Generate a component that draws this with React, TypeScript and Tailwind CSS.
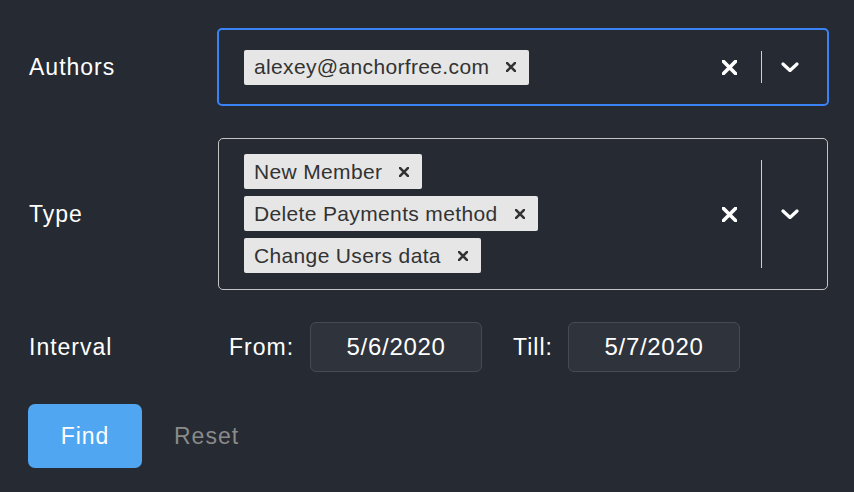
import React from "react";

function ClearIcon() {
  return (
    <svg width="15" height="15" viewBox="0 0 15 15" className="block">
      <path d="M-1 -1 L16 16 M16 -1 L-1 16" stroke="#ffffff" strokeWidth="3.6" strokeLinecap="square" fill="none" />
    </svg>
  );
}

function Chevron() {
  return (
    <svg width="18" height="10" viewBox="0 0 18 10" className="block">
      <path d="M2 2 L9 8.5 L16 2" stroke="#ffffff" strokeWidth="3.2" strokeLinecap="round" strokeLinejoin="round" fill="none" />
    </svg>
  );
}

function TagX() {
  return (
    <svg width="10" height="10" viewBox="0 0 10 10" className="block">
      <path d="M-0.5 -0.5 L10.5 10.5 M10.5 -0.5 L-0.5 10.5" stroke="#333333" strokeWidth="2.6" strokeLinecap="square" fill="none" />
    </svg>
  );
}

function Tag({ label }: { label: string }) {
  return (
    <div className="flex h-[35px] items-center rounded-[2px] bg-[#e6e6e6] pl-[10px] pr-[13px] text-[21px] tracking-[0.35px] text-[#333333]">
      <span>{label}</span>
      <span className="ml-[17px]">
        <TagX />
      </span>
    </div>
  );
}

function Indicators() {
  return (
    <div className="flex items-stretch py-[21px]">
      <div className="flex items-center pr-[24px]">
        <ClearIcon />
      </div>
      <div className="w-px bg-[#cfcfcf]" />
      <div className="flex items-center pl-[19px] pr-[28px]">
        <Chevron />
      </div>
    </div>
  );
}

export default function App() {
  return (
    <div className="flex min-h-screen flex-col gap-[32px] bg-[#262a32] pl-[29px] pr-[25px] pt-[28px] font-['Liberation_Sans',Arial,sans-serif] text-white">
      {/* Authors */}
      <div className="flex items-center">
        <div className="w-[188px] text-[23px] tracking-[1px]">Authors</div>
        <div className="flex h-[78px] flex-1 items-stretch rounded-[5px] border-2 border-[#3b82f6]">
          <div className="flex flex-1 items-center pl-[25px]">
            <Tag label="alexey@anchorfree.com" />
          </div>
          <Indicators />
        </div>
      </div>

      {/* Type */}
      <div className="flex items-center">
        <div className="w-[188px] text-[23px] tracking-[1px]">Type</div>
        <div className="mx-px flex flex-1 items-stretch rounded-[5px] border border-[#c4c4c4]">
          <div className="flex flex-1 flex-col items-start gap-[7px] pb-[16px] pl-[25px] pt-[15px]">
            <Tag label="New Member" />
            <Tag label="Delete Payments method" />
            <Tag label="Change Users data" />
          </div>
          <Indicators />
        </div>
      </div>

      {/* Interval */}
      <div className="flex items-center text-[23px] tracking-[1px]">
        <div className="w-[188px]">Interval</div>
        <div className="ml-[12px]">From:</div>
        <div className="ml-[16px] flex h-[50px] w-[172px] items-center justify-center rounded-[6px] border border-[#464a52] bg-[#2f333b] text-[24px] tracking-[0.7px]">
          5/6/2020
        </div>
        <div className="ml-[31px]">Till:</div>
        <div className="ml-[15px] flex h-[50px] w-[172px] items-center justify-center rounded-[6px] border border-[#464a52] bg-[#2f333b] text-[24px] tracking-[0.7px]">
          5/7/2020
        </div>
      </div>

      {/* Buttons */}
      <div className="-ml-px flex items-center text-[23px] tracking-[1px]">
        <button className="flex h-[64px] w-[114px] items-center justify-center rounded-[7px] bg-[#50a6f0] text-white">
          Find
        </button>
        <button className="ml-[32px] text-[#8a8a8a]">Reset</button>
      </div>
    </div>
  );
}
